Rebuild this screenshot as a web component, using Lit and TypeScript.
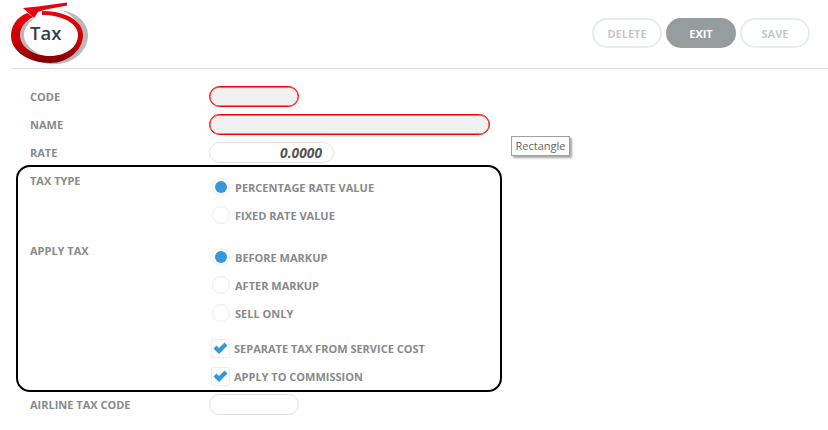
import { LitElement, html, css, svg } from "lit";
import { customElement } from "lit/decorators.js";

@customElement("app-root")
export class AppRoot extends LitElement {
  static styles = css`
    :host { display: block; width: 828px; height: 430px; overflow: hidden; background: #fff; position: relative; font-family: "Open Sans", sans-serif; }
    * { box-sizing: border-box; }
    .header { height: 69px; margin-left: 11px; border-bottom: 1px solid #dcdaee; display: flex; justify-content: space-between; padding-right: 18px; }
    .logo { position: relative; width: 80px; height: 68px; }
    .logo svg { display: block; margin-left: -11px; }
    .logo span { position: absolute; left: 19px; top: 20px; font-size: 18.5px; line-height: 26px; font-weight: 600; color: #343c52; }
    .actions { display: flex; gap: 4px; padding-top: 18px; }
    .btn { width: 70px; height: 30px; border-radius: 15px; border: 2px solid #e8eded; display: flex; align-items: center; justify-content: center; font-size: 11px; font-weight: 700; color: #c4cacc; }
    .btn.exit { background: #979c9f; border-color: #979c9f; color: #fff; }
    .form { padding: 17px 0 0 16px; }
    .row { display: grid; grid-template-columns: 193px 1fr; height: 28px; align-items: start; }
    .lbl { padding-left: 14px; font-size: 11px; font-weight: 700; color: #888a8c; line-height: 22px; }
    .input { height: 21px; border-radius: 11px; border: 1px solid #e1e3e3; background: #fff; }
    .input.req { border-color: #f00; background: #f1f1f1; box-shadow: inset 0 0 0 0.4px #f00; }
    .w90 { width: 90px; } .w281 { width: 281px; }
    .w125 { width: 125px; font-size: 13.8px; font-weight: 700; font-style: italic; color: #555; text-align: right; padding-right: 11px; line-height: 19px; }
    .box { width: 486px; height: 227px; margin-top: -5px; border: 2px solid #000; border-radius: 14px; margin-bottom: 2px; padding-top: 4px; }
    .box .lbl { padding-left: 12px; line-height: 20px; }
    .group { display: grid; grid-template-columns: 191px 1fr; }
    .group.apply { margin-top: 12px; }
    .group.apply .opts { padding-top: 2px; }
    .opt { height: 28px; display: flex; align-items: center; font-size: 11px; font-weight: 700; color: #888a8c; padding-left: 3px; gap: 5px; }
    .opts.tax { padding-top: 2px; }
    .radio { width: 18px; height: 18px; border-radius: 50%; border: 1px solid #eeeeee; background: #fff; display: flex; align-items: center; justify-content: center; flex: none; }
    .radio.on::after { content: ""; width: 12px; height: 12px; border-radius: 50%; background: #3498db; }
    .checks { margin-top: 7px; }
    .check { width: 19px; height: 19px; margin-left: -1px; border-radius: 2px; border: 1px solid #eeeeee; background: #fff; flex: none; margin-right: -1px; display: flex; align-items: center; justify-content: center; }
    .tip { position: absolute; left: 511px; top: 136px; width: 59px; height: 20px; border: 1px solid #a0a0a0; background: #fff; box-shadow: 2px 2px 2px rgba(0,0,0,.35); font-size: 11px; line-height: 18px; color: #666; text-align: center; }
  `;

  private radio(label: string, on = false) {
    return html`<div class="opt"><span class="radio ${on ? "on" : ""}"></span>${label}</div>`;
  }

  private check(label: string) {
    return html`<div class="opt"><span class="check">
      <svg width="15" height="13" viewBox="0 0 15 13"><path d="M0.5 6.5 L3.5 3.5 L6 6 L11.5 0.5 L14.5 3.5 L6 12 Z" fill="#3498db"/></svg>
    </span>${label}</div>`;
  }

  private logo() {
    return svg`<svg width="92" height="68" viewBox="0 0 92 68">
      <defs><linearGradient id="r" x1="0" y1="0" x2="0" y2="1"><stop offset="0" stop-color="#e8000b"/><stop offset=".6" stop-color="#c80008"/><stop offset="1" stop-color="#7d0004"/></linearGradient></defs>
      <path fill="#b9b9b9" d="M23 50 C30 60 45 65 57 64 C75 63 88 50 88 35 C88 22 76 12 60 10 C72 14 82 24 82 35 C82 50 66 58 50 58 C38 58 28 54 23 50 Z"/>
      <path fill="#b9b9b9" d="M19 35 C19 47 33 57 50 58 C38 55 24 47 24 35 C24 28 29 22 35 18 C25 21 19 27 19 35 Z"/>
      <path fill="url(#r)" d="M27 13 C16 18 11 26 11 36 C11 52 30 63 50 63 C68 63 83 50 83 35 C83 22 68 11 42 11 L42 15 C62 15 78 23 78 35 C78 47 66 56 50 56 C33 56 20 47 20 35 C20 27 26 21 33 17 Z"/>
      <path fill="#e8000b" d="M23 8 L38 6.5 L67 2.5 L67 5.5 L46 9.5 L38 12 L34 18 Z"/>
    </svg>`;
  }

  render() {
    return html`
      <div class="header">
        <div class="logo">${this.logo()}<span>Tax</span></div>
        <div class="actions">
          <div class="btn">DELETE</div>
          <div class="btn exit">EXIT</div>
          <div class="btn">SAVE</div>
        </div>
      </div>
      <div class="form">
        <div class="row"><div class="lbl">CODE</div><div class="input req w90"></div></div>
        <div class="row"><div class="lbl">NAME</div><div class="input req w281"></div></div>
        <div class="row"><div class="lbl">RATE</div><div class="input w125">0.0000</div></div>
        <div class="box">
          <div class="group">
            <div class="lbl">TAX TYPE</div>
            <div class="opts tax">
              ${this.radio("PERCENTAGE RATE VALUE", true)}
              ${this.radio("FIXED RATE VALUE")}
            </div>
          </div>
          <div class="group apply">
            <div class="lbl">APPLY TAX</div>
            <div class="opts">
              ${this.radio("BEFORE MARKUP", true)}
              ${this.radio("AFTER MARKUP")}
              ${this.radio("SELL ONLY")}
              <div class="checks">
                ${this.check("SEPARATE TAX FROM SERVICE COST")}
                ${this.check("APPLY TO COMMISSION")}
              </div>
            </div>
          </div>
        </div>
        <div class="row"><div class="lbl">AIRLINE TAX CODE</div><div class="input w90"></div></div>
      </div>
      <div class="tip">Rectangle</div>
    `;
  }
}
